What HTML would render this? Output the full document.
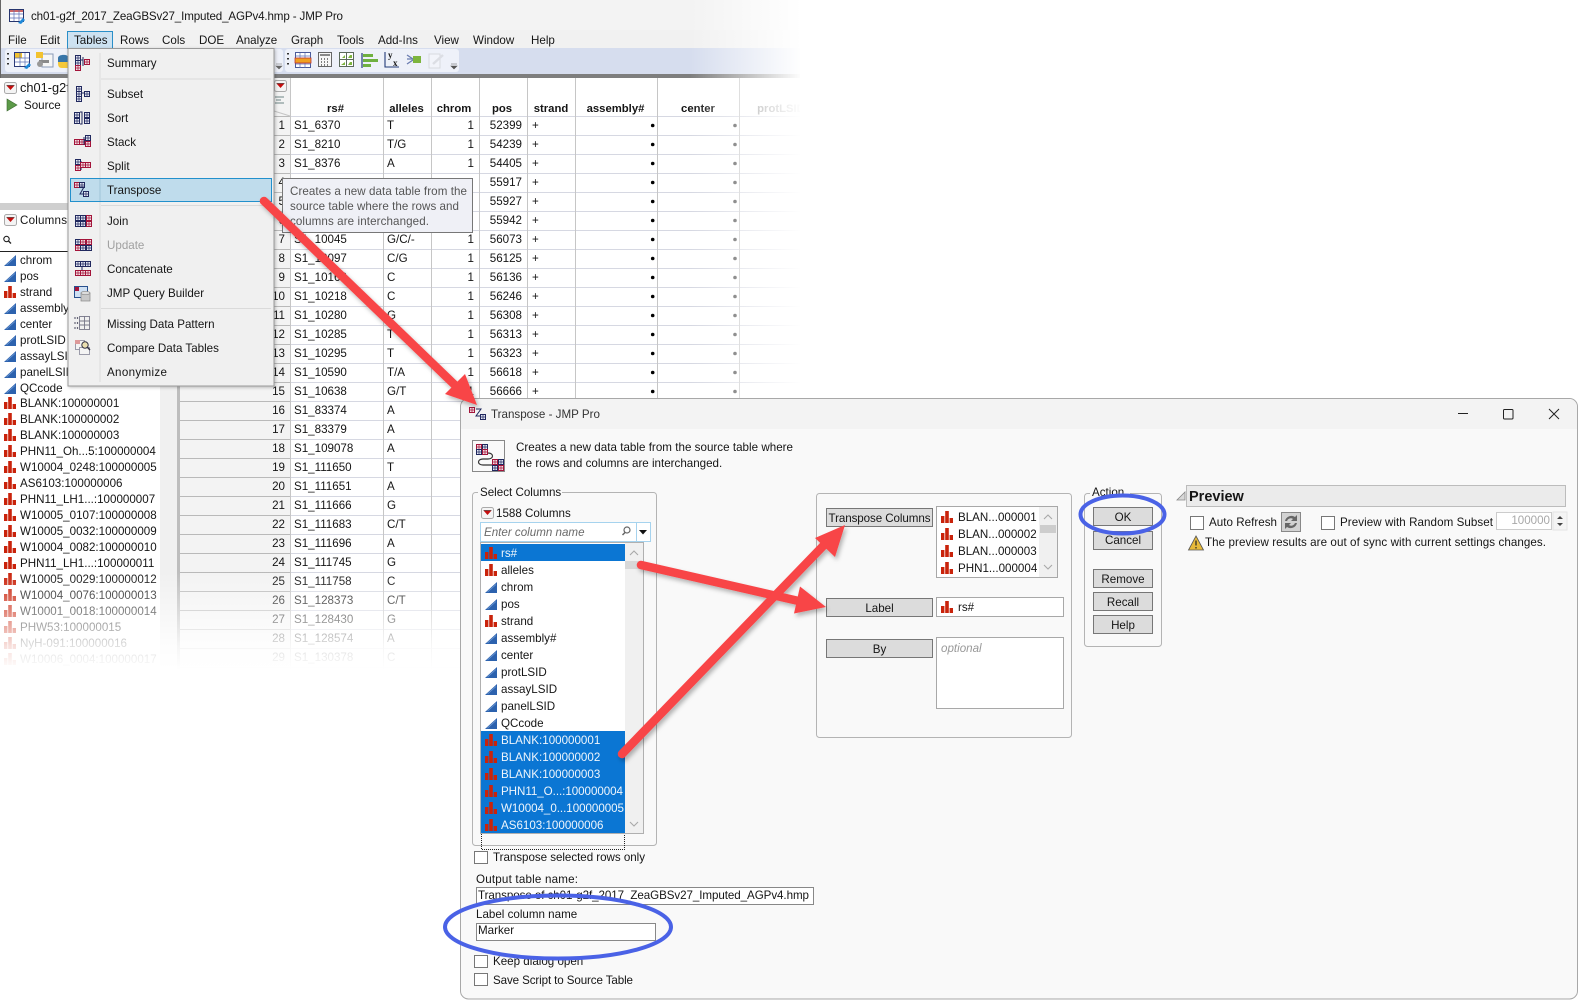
<!DOCTYPE html>
<html lang="en"><head><meta charset="utf-8"><title>JMP Transpose</title>
<style>
html,body{margin:0;padding:0;background:#fff;width:1578px;height:1000px;overflow:hidden}
svg{display:block}
text{font-family:"Liberation Sans",sans-serif;font-size:11.6px;fill:#151515}
.b{font-weight:bold;font-size:11.3px}
.c{text-anchor:middle}
.e{text-anchor:end}
.w text{fill:#eef5fc}
.i{font-style:italic}
</style></head><body>
<svg xmlns="http://www.w3.org/2000/svg" width="1578" height="1000" viewBox="0 0 1578 1000">
<defs>
<linearGradient id="fr" x1="0" x2="1" y1="0" y2="0"><stop offset="0" stop-color="#fff" stop-opacity="0"/><stop offset="1" stop-color="#fff"/></linearGradient>
<linearGradient id="fb" x1="0" x2="0" y1="0" y2="1"><stop offset="0" stop-color="#fff" stop-opacity="0"/><stop offset=".75" stop-color="#fff" stop-opacity=".85"/><stop offset="1" stop-color="#fff"/></linearGradient>
<filter id="sh" x="-20%" y="-20%" width="140%" height="140%"><feDropShadow dx="2" dy="3" stdDeviation="2.2" flood-color="#000" flood-opacity=".28"/></filter>
<filter id="ms" x="-5%" y="-5%" width="110%" height="110%"><feDropShadow dx="1" dy="1" stdDeviation="1.5" flood-color="#000" flood-opacity=".25"/></filter>
<symbol id="bar" viewBox="0 0 12 12" width="12" height="12"><path d="M0 5h3.400v7H0zM4.200 0h3.600v12H4.200zM8.600 7H12v5H8.600z" fill="#c9230b"/></symbol>
<symbol id="tri" viewBox="0 0 12 12" width="12" height="12"><path d="M0 12L12 1v11z" fill="#2c62ae"/><path d="M2.500 11L11 3.500" stroke="#6f9ad4" stroke-width=".8"/></symbol>
<g id="cn"><rect x=".5" y=".5" width="5" height="5" fill="#e6e9f6" stroke="#20285e"/><path d="M3 .5v5M.5 3h5" stroke="#20285e" stroke-width=".7"/></g>
<g id="cr"><rect x=".5" y=".5" width="5" height="5" fill="#f3dfe5" stroke="#a3143a"/><path d="M3 .5v5M.5 3h5" stroke="#a3143a" stroke-width=".7"/></g>
<symbol id="rb" viewBox="0 0 13 12" width="13" height="12"><rect x=".5" y=".5" width="12" height="11" rx="2" fill="#f4f4f4" stroke="#aaa"/><path d="M2.600 3.600h7.800L6.500 8z" fill="#c40d0d"/><path d="M2.600 3.600h7.800" stroke="#400" stroke-width=".7"/></symbol>
<symbol id="up" viewBox="0 0 10 6" width="10" height="6"><path d="M1 5l4-4 4 4" fill="none" stroke="#a8a8a8" stroke-width="1.100"/></symbol>
<symbol id="dn" viewBox="0 0 10 6" width="10" height="6"><path d="M1 1l4 4 4-4" fill="none" stroke="#a8a8a8" stroke-width="1.100"/></symbol>
</defs>

<!-- main JMP window -->
<rect width="1578" height="1000" fill="#fff"/>
<rect x="0" y="0" width="810" height="30" fill="#f3f3f3"/>
<rect x="0" y="30" width="810" height="18" fill="#f1f1f1"/>
<rect x="0" y="48" width="810" height="26" fill="#d6ddee"/>
<rect x="5" y="49" width="278" height="23" rx="3" fill="#eef1f9"/>
<rect x="285" y="49" width="174" height="23" rx="3" fill="#eef1f9"/>
<rect x="0" y="74" width="810" height="4" fill="#7e7e7e"/>
<rect x="0" y="0" width="1" height="640" fill="#666"/>
<!-- title -->
<g transform="translate(9,9)"><rect x=".5" y=".5" width="14" height="12" fill="#fff" stroke="#26356e"/><rect x="1" y="1" width="13" height="2" fill="#c66"/><path d="M1 5h13M1 9h13M5 1v11M10 1v11" stroke="#5b6fb5" stroke-width=".7"/><path d="M9 14l5-5 2 2-4 4z" fill="#1e88d8"/></g>
<text x="31" y="20" textLength="312">ch01-g2f_2017_ZeaGBSv27_Imputed_AGPv4.hmp - JMP Pro</text>
<!-- menubar -->
<text x="8" y="44">File</text><text x="40" y="44">Edit</text>
<rect x="67.500" y="31.500" width="45" height="17" fill="#cde2f1" stroke="#2a8fc8"/>
<text x="74" y="44">Tables</text><text x="120" y="44">Rows</text><text x="162" y="44">Cols</text><text x="199" y="44">DOE</text><text x="236" y="44">Analyze</text><text x="291" y="44">Graph</text><text x="337" y="44">Tools</text><text x="378" y="44">Add-Ins</text><text x="434" y="44">View</text><text x="473" y="44">Window</text><text x="531" y="44">Help</text>
<!-- toolbar icons -->
<path d="M8 53v1.500M8 58v1.500M8 63v1.500" stroke="#333" stroke-width="2"/>
<g transform="translate(14,52)"><rect x=".5" y=".5" width="15" height="14" fill="#fff" stroke="#2b3a7a"/><rect x="1" y="1" width="7" height="5" fill="#f2c230"/><path d="M1 6h14M1 10h14M6 1v13M11 1v13" stroke="#5b6fb5" stroke-width=".7"/><path d="M10 16l5-5 2 2-4 4z" fill="#1e88d8"/></g>
<g transform="translate(36,52)"><rect x="6" y="2" width="11" height="13" fill="#f6f6f6" stroke="#8a9ab8"/><rect x="0" y="0" width="7" height="6" fill="#f2c230"/><path d="M3 8h10v3H3z" fill="#8a8a8a"/><circle cx="4" cy="12" r="3" fill="#999"/></g>
<path d="M58 58c0-4 10-4 10-1v5H58z" fill="#3775a9"/><path d="M58 62h10v6h-6c-4 0-4-3-4-6z" fill="#f5c83a"/>
<path d="M276 64h6M276 66h6l-3 3z" fill="#666" stroke="#666" stroke-width=".6"/>
<path d="M288 53v1.500M288 58v1.500M288 63v1.500" stroke="#333" stroke-width="2"/>
<g transform="translate(295,52)"><rect x=".5" y=".5" width="15" height="15" fill="#fff" stroke="#4a5a9a"/><path d="M1 4h15M1 12h15M5 1v15M10 1v15" stroke="#5b6fb5" stroke-width=".7"/><rect x="0" y="6" width="16" height="5" fill="#f0a020" stroke="#b33" stroke-width=".8"/></g>
<g transform="translate(318,52)"><rect x=".5" y=".5" width="13" height="14" fill="#f6f6f6" stroke="#666"/><rect x="2" y="2" width="10" height="2" fill="#888"/><path d="M3 7h1M6 7h1M9 7h1M3 10h1M6 10h1M9 10h1M3 13h1M6 13h1M9 13h1" stroke="#555" stroke-width="1.600"/></g>
<g transform="translate(339,52)"><rect x=".5" y=".5" width="14" height="14" fill="#fff" stroke="#5c6a5c"/><path d="M7.500 1v13M1 7.500h13" stroke="#5c6a5c"/><path d="M3 6h3V3zM9 6h4V3H11zM2 13h4v-3zM9 13h4v-3H11z" fill="#7db53e"/></g>
<path d="M362 53v15" stroke="#223a78" stroke-width="1.200"/><path d="M363 54h10v3h-10zM363 59h15v3h-15zM363 64h8v3h-8z" fill="#6fb040"/>
<path d="M385 52v15h14" fill="none" stroke="#223a78" stroke-width="1.100"/><text x="388" y="58" class="b" style="font-family:'Liberation Serif',serif;font-size:9px">y</text><text x="393" y="66" class="b" style="font-family:'Liberation Serif',serif;font-size:9px">x</text>
<path d="M407 55l6 4M407 59h6M407 64l6-4" stroke="#6a7cb0" stroke-width="1.300"/><rect x="413" y="56" width="8" height="7" fill="#7db53e"/>
<g opacity=".25"><rect x="429" y="54" width="11" height="14" fill="#fff" stroke="#999"/><path d="M433 64l10-9" stroke="#aaa" stroke-width="2.500"/></g>
<path d="M451 64h6M451 66h6l-3 3z" fill="#555" stroke="#555" stroke-width=".6"/>

<!-- left panels -->
<rect x="0" y="78" width="68" height="125" fill="#fff"/>
<use href="#rb" x="4" y="82"/>
<text x="20" y="92" style="font-size:12.800px">ch01-g2f</text>
<path d="M7 99l10 6-10 6z" fill="#5c9a48" stroke="#3c6a30" stroke-width=".6"/>
<text x="24" y="109">Source</text>
<rect x="0" y="203" width="160" height="7" fill="#cfcfcf"/>
<rect x="0" y="210" width="160" height="450" fill="#fff"/>
<rect x="160" y="210" width="17" height="460" fill="#f0f0f0"/>
<rect x="160" y="78" width="17" height="132" fill="#f0f0f0"/>
<rect x="177" y="78" width="3" height="592" fill="#bdbdbd"/>
<use href="#rb" x="4" y="214"/>
<text x="20" y="224" textLength="47">Columns</text>
<circle cx="6.500" cy="239" r="2.700" fill="none" stroke="#222" stroke-width="1.100"/><path d="M8.500 241l2.500 2.500" stroke="#222" stroke-width="1.300"/>
<rect x="0" y="251" width="160" height="1" fill="#222"/>
<use href="#tri" x="4" y="254"/><text x="20" y="264">chrom</text>
<use href="#tri" x="4" y="270"/><text x="20" y="280">pos</text>
<use href="#bar" x="4" y="286"/><text x="20" y="296">strand</text>
<use href="#tri" x="4" y="302"/><text x="20" y="312">assembly#</text>
<use href="#tri" x="4" y="318"/><text x="20" y="328">center</text>
<use href="#tri" x="4" y="334"/><text x="20" y="344">protLSID</text>
<use href="#tri" x="4" y="350"/><text x="20" y="360">assayLSID</text>
<use href="#tri" x="4" y="366"/><text x="20" y="376">panelLSID</text>
<use href="#tri" x="4" y="382"/><text x="20" y="392">QCcode</text>
<use href="#bar" x="4" y="397"/><text x="20" y="407">BLANK:100000001</text>
<use href="#bar" x="4" y="413"/><text x="20" y="423">BLANK:100000002</text>
<use href="#bar" x="4" y="429"/><text x="20" y="439">BLANK:100000003</text>
<use href="#bar" x="4" y="445"/><text x="20" y="455">PHN11_Oh...5:100000004</text>
<use href="#bar" x="4" y="461"/><text x="20" y="471">W10004_0248:100000005</text>
<use href="#bar" x="4" y="477"/><text x="20" y="487">AS6103:100000006</text>
<use href="#bar" x="4" y="493"/><text x="20" y="503">PHN11_LH1...:100000007</text>
<use href="#bar" x="4" y="509"/><text x="20" y="519">W10005_0107:100000008</text>
<use href="#bar" x="4" y="525"/><text x="20" y="535">W10005_0032:100000009</text>
<use href="#bar" x="4" y="541"/><text x="20" y="551">W10004_0082:100000010</text>
<use href="#bar" x="4" y="557"/><text x="20" y="567">PHN11_LH1...:100000011</text>
<use href="#bar" x="4" y="573"/><text x="20" y="583">W10005_0029:100000012</text>
<use href="#bar" x="4" y="589"/><text x="20" y="599">W10004_0076:100000013</text>
<use href="#bar" x="4" y="605"/><text x="20" y="615">W10001_0018:100000014</text>
<use href="#bar" x="4" y="621"/><text x="20" y="631">PHW53:100000015</text>
<use href="#bar" x="4" y="637"/><text x="20" y="647">NyH-091:100000016</text>
<use href="#bar" x="4" y="653"/><text x="20" y="663">W10006_0004:100000017</text>

<!-- data table -->
<rect x="180" y="78" width="110" height="592" fill="#f3f3f3"/>
<rect x="290" y="78" width="520" height="592" fill="#fff"/>
<path d="M290 116.500h520M290 135.500h520M290 154.500h520M290 173.500h520M290 192.500h520M290 211.500h520M290 230.500h520M290 249.500h520M290 268.500h520M290 287.500h520M290 306.500h520M290 325.500h520M290 344.500h520M290 363.500h520M290 382.500h520M290 401.500h520M290 420.500h520M290 439.500h520M290 458.500h520M290 477.500h520M290 496.500h520M290 515.500h520M290 534.500h520M290 553.500h520M290 572.500h520M290 591.500h520M290 610.500h520M290 629.500h520M290 648.500h520M290 667.500h520" stroke="#d6d8e2" fill="none"/>
<path d="M180 116.500h110M180 135.500h110M180 154.500h110M180 173.500h110M180 192.500h110M180 211.500h110M180 230.500h110M180 249.500h110M180 268.500h110M180 287.500h110M180 306.500h110M180 325.500h110M180 344.500h110M180 363.500h110M180 382.500h110M180 401.500h110M180 420.500h110M180 439.500h110M180 458.500h110M180 477.500h110M180 496.500h110M180 515.500h110M180 534.500h110M180 553.500h110M180 572.500h110M180 591.500h110M180 610.500h110M180 629.500h110M180 648.500h110M180 667.500h110" stroke="#b9b9b9" fill="none"/>
<path d="M290.500 78v592M383.500 78v592M431.500 78v592M479.500 78v592M527.500 78v592M575.500 78v592M657.500 78v592M739.500 78v592" stroke="#c6c6c6" fill="none"/>
<use href="#rb" x="274" y="80"/>
<path d="M275 97h9M276 100h5M275 103h9" stroke="#9aa" stroke-width="1.400"/>
<path d="M274 111l16 5" stroke="#c4c4c4"/>
<text class="c b" x="335.500" y="112">rs#</text><text class="c b" x="406.500" y="112">alleles</text><text class="c b" x="454" y="112">chrom</text><text class="c b" x="502" y="112">pos</text><text class="c b" x="551" y="112">strand</text><text class="c b" x="615.500" y="112">assembly#</text><text class="c b" x="698" y="112">center</text><text class="c b" x="781" y="112" style="fill:#888">protLSID</text>
<!-- row numbers -->
<text class="e" x="285" y="129">1</text><text class="e" x="285" y="148">2</text><text class="e" x="285" y="167">3</text><text class="e" x="285" y="186">4</text><text class="e" x="285" y="205">5</text><text class="e" x="285" y="224">6</text><text class="e" x="285" y="243">7</text><text class="e" x="285" y="262">8</text><text class="e" x="285" y="281">9</text><text class="e" x="285" y="300">10</text><text class="e" x="285" y="319">11</text><text class="e" x="285" y="338">12</text><text class="e" x="285" y="357">13</text><text class="e" x="285" y="376">14</text><text class="e" x="285" y="395">15</text><text class="e" x="285" y="414">16</text><text class="e" x="285" y="433">17</text><text class="e" x="285" y="452">18</text><text class="e" x="285" y="471">19</text><text class="e" x="285" y="490">20</text><text class="e" x="285" y="509">21</text><text class="e" x="285" y="528">22</text><text class="e" x="285" y="547">23</text><text class="e" x="285" y="566">24</text><text class="e" x="285" y="585">25</text><text class="e" x="285" y="604">26</text><text class="e" x="285" y="623">27</text><text class="e" x="285" y="642">28</text><text class="e" x="285" y="661">29</text>
<!-- rs -->
<text x="294" y="129">S1_6370</text><text x="294" y="148">S1_8210</text><text x="294" y="167">S1_8376</text><text x="294" y="243">S1_10045</text><text x="294" y="262">S1_10097</text><text x="294" y="281">S1_10166</text><text x="294" y="300">S1_10218</text><text x="294" y="319">S1_10280</text><text x="294" y="338">S1_10285</text><text x="294" y="357">S1_10295</text><text x="294" y="376">S1_10590</text><text x="294" y="395">S1_10638</text><text x="294" y="414">S1_83374</text><text x="294" y="433">S1_83379</text><text x="294" y="452">S1_109078</text><text x="294" y="471">S1_111650</text><text x="294" y="490">S1_111651</text><text x="294" y="509">S1_111666</text><text x="294" y="528">S1_111683</text><text x="294" y="547">S1_111696</text><text x="294" y="566">S1_111745</text><text x="294" y="585">S1_111758</text><text x="294" y="604">S1_128373</text><text x="294" y="623">S1_128430</text><text x="294" y="642">S1_128574</text><text x="294" y="661">S1_130378</text>
<!-- alleles -->
<text x="387" y="129">T</text><text x="387" y="148">T/G</text><text x="387" y="167">A</text><text x="387" y="243">G/C/-</text><text x="387" y="262">C/G</text><text x="387" y="281">C</text><text x="387" y="300">C</text><text x="387" y="319">G</text><text x="387" y="338">T</text><text x="387" y="357">T</text><text x="387" y="376">T/A</text><text x="387" y="395">G/T</text><text x="387" y="414">A</text><text x="387" y="433">A</text><text x="387" y="452">A</text><text x="387" y="471">T</text><text x="387" y="490">A</text><text x="387" y="509">G</text><text x="387" y="528">C/T</text><text x="387" y="547">A</text><text x="387" y="566">G</text><text x="387" y="585">C</text><text x="387" y="604">C/T</text><text x="387" y="623">G</text><text x="387" y="642">A</text><text x="387" y="661">C</text>
<!-- chrom -->
<text class="e" x="474" y="129">1</text><text class="e" x="474" y="148">1</text><text class="e" x="474" y="167">1</text><text class="e" x="474" y="243">1</text><text class="e" x="474" y="262">1</text><text class="e" x="474" y="281">1</text><text class="e" x="474" y="300">1</text><text class="e" x="474" y="319">1</text><text class="e" x="474" y="338">1</text><text class="e" x="474" y="357">1</text><text class="e" x="474" y="376">1</text><text class="e" x="474" y="395">1</text>
<!-- pos -->
<text class="e" x="522" y="129">52399</text><text class="e" x="522" y="148">54239</text><text class="e" x="522" y="167">54405</text><text class="e" x="522" y="186">55917</text><text class="e" x="522" y="205">55927</text><text class="e" x="522" y="224">55942</text><text class="e" x="522" y="243">56073</text><text class="e" x="522" y="262">56125</text><text class="e" x="522" y="281">56136</text><text class="e" x="522" y="300">56246</text><text class="e" x="522" y="319">56308</text><text class="e" x="522" y="338">56313</text><text class="e" x="522" y="357">56323</text><text class="e" x="522" y="376">56618</text><text class="e" x="522" y="395">56666</text>
<!-- strand -->
<text x="532" y="129">+</text><text x="532" y="148">+</text><text x="532" y="167">+</text><text x="532" y="186">+</text><text x="532" y="205">+</text><text x="532" y="224">+</text><text x="532" y="243">+</text><text x="532" y="262">+</text><text x="532" y="281">+</text><text x="532" y="300">+</text><text x="532" y="319">+</text><text x="532" y="338">+</text><text x="532" y="357">+</text><text x="532" y="376">+</text><text x="532" y="395">+</text>
<!-- dots -->
<g fill="#000" transform="translate(-2.300,-.5)"><circle cx="655" cy="126" r="1.800"/><circle cx="655" cy="145" r="1.800"/><circle cx="655" cy="164" r="1.800"/><circle cx="655" cy="183" r="1.800"/><circle cx="655" cy="202" r="1.800"/><circle cx="655" cy="221" r="1.800"/><circle cx="655" cy="240" r="1.800"/><circle cx="655" cy="259" r="1.800"/><circle cx="655" cy="278" r="1.800"/><circle cx="655" cy="297" r="1.800"/><circle cx="655" cy="316" r="1.800"/><circle cx="655" cy="335" r="1.800"/><circle cx="655" cy="354" r="1.800"/><circle cx="655" cy="373" r="1.800"/><circle cx="655" cy="392" r="1.800"/></g>
<g fill="#444" transform="translate(-2,-.5)"><circle cx="737" cy="126" r="1.800"/><circle cx="737" cy="145" r="1.800"/><circle cx="737" cy="164" r="1.800"/><circle cx="737" cy="183" r="1.800"/><circle cx="737" cy="202" r="1.800"/><circle cx="737" cy="221" r="1.800"/><circle cx="737" cy="240" r="1.800"/><circle cx="737" cy="259" r="1.800"/><circle cx="737" cy="278" r="1.800"/><circle cx="737" cy="297" r="1.800"/><circle cx="737" cy="316" r="1.800"/><circle cx="737" cy="335" r="1.800"/><circle cx="737" cy="354" r="1.800"/><circle cx="737" cy="373" r="1.800"/><circle cx="737" cy="392" r="1.800"/></g>

<!-- fades -->
<rect x="690" y="0" width="112" height="398" fill="url(#fr)"/>
<rect x="800" y="0" width="778" height="398" fill="#fff"/>
<rect x="0" y="572" width="462" height="98" fill="url(#fb)"/>
<rect x="0" y="670" width="462" height="330" fill="#fff"/>

<!-- tooltip -->
<rect x="282.500" y="178.500" width="190" height="54" fill="#eff0f6" stroke="#777"/>
<text x="290" y="195" style="fill:#555" textLength="177">Creates a new data table from the</text>
<text x="290" y="210" style="fill:#555" textLength="169">source table where the rows and</text>
<text x="290" y="225" style="fill:#555" textLength="139">columns are interchanged.</text>

<!-- tables menu -->
<rect x="68" y="48.500" width="206" height="337.500" fill="#f0f0f0" stroke="#9a9a9a" filter="url(#ms)"/>
<path d="M100 53v329" stroke="#dcdcdc"/>
<path d="M101 79h170M101 205.500h170M101 308.500h170" stroke="#dadada"/>
<rect x="70.500" y="178.500" width="201" height="23" fill="#bfdcec" stroke="#2290cc"/>
<path d="M100 179v22" stroke="#9fc3d8"/>
<text x="107" y="67">Summary</text><text x="107" y="98">Subset</text><text x="107" y="122">Sort</text><text x="107" y="146">Stack</text><text x="107" y="170">Split</text><text x="107" y="194">Transpose</text><text x="107" y="225">Join</text><text x="107" y="249" style="fill:#a0a0a0">Update</text><text x="107" y="273">Concatenate</text><text x="107" y="297">JMP Query Builder</text><text x="107" y="328">Missing Data Pattern</text><text x="107" y="352">Compare Data Tables</text><text x="107" y="376" textLength="60">Anonymize</text>
<!-- menu icons -->
<use href="#cn" x="75" y="55"/><use href="#cn" x="75" y="60"/><use href="#cr" x="75" y="65"/><path d="M81 60h2M83 57v9" fill="none" stroke="#20285e"/><use href="#cr" x="84" y="59"/>
<use href="#cn" x="76" y="86"/><use href="#cn" x="76" y="91"/><use href="#cn" x="76" y="96"/><path d="M82 93h2" stroke="#20285e"/><use href="#cn" x="84" y="91"/>
<use href="#cn" x="74" y="112"/><use href="#cn" x="74" y="118"/><path d="M80 112h2v12h-2" fill="none" stroke="#20285e"/><use href="#cn" x="84" y="112"/><use href="#cn" x="84" y="118"/>
<use href="#cr" x="74" y="139"/><use href="#cr" x="79" y="139"/><path d="M85 141h-1M84 137v8" stroke="#20285e" fill="none"/><use href="#cn" x="85" y="135"/><use href="#cr" x="85" y="141"/>
<use href="#cn" x="75" y="159"/><use href="#cr" x="75" y="165"/><path d="M81 165h-0M81 161v9" stroke="#20285e" fill="none"/><use href="#cr" x="80" y="162"/><use href="#cr" x="85" y="162"/>
<use href="#cr" x="74" y="182"/><use href="#cn" x="79" y="182"/><path d="M80 187h4l-4 7h3" fill="none" stroke="#20285e"/><use href="#cn" x="83" y="191"/><use href="#cr" x="84" y="190" opacity="0"/>
<use href="#cn" x="75" y="215"/><use href="#cn" x="80" y="215"/><use href="#cn" x="75" y="221"/><use href="#cn" x="80" y="221"/><path d="M85 220h1" stroke="#20285e"/><use href="#cr" x="86" y="215"/><use href="#cr" x="86" y="221"/>
<use href="#cn" x="75" y="239"/><use href="#cr" x="80" y="239"/><use href="#cr" x="75" y="245"/><use href="#cn" x="80" y="245"/><path d="M85 244h1" stroke="#20285e"/><use href="#cr" x="86" y="239"/><use href="#cn" x="86" y="245"/>
<use href="#cn" x="75" y="261"/><use href="#cn" x="80" y="261"/><use href="#cn" x="85" y="261"/><path d="M82 267v3" stroke="#20285e"/><use href="#cr" x="75" y="270"/><use href="#cr" x="80" y="270"/><use href="#cr" x="85" y="270"/>
<rect x="74.500" y="286.500" width="13" height="11" fill="#cfe0f3" stroke="#28508e"/><rect x="75" y="287" width="4" height="4" fill="#a3143a"/><rect x="81" y="293" width="9" height="8" fill="#c8c8c8" stroke="#888" stroke-width=".7"/><ellipse cx="85.500" cy="293" rx="4.500" ry="1.700" fill="#ddd" stroke="#888" stroke-width=".7"/>
<g stroke="#778" fill="none" stroke-width=".9"><rect x="79.500" y="316.500" width="10" height="13"/><path d="M79 321h11M79 325h11M84.500 316v13"/></g><path d="M75 317v2M75 322v2M75 327v2M77.500 317v2M77.500 322v2M77.500 327v2" stroke="#667" stroke-width="1.200"/>
<g stroke="#889" fill="#f4f4f4" stroke-width=".8"><rect x="75.500" y="340.500" width="9" height="9"/><rect x="79.500" y="347.500" width="10" height="7"/></g><rect x="75" y="340" width="5" height="4" fill="#d99"/><circle cx="85" cy="345" r="3.200" fill="#eadfb0" stroke="#334"/><path d="M87.300 347.300l2.700 2.700" stroke="#334" stroke-width="1.400"/>

<!-- dialog -->
<rect x="460.500" y="398.500" width="1117" height="600.500" rx="8" fill="#f9f9f9" stroke="#a8a8a8"/>
<path d="M461 429V407a8 8 0 0 1 8-8H1569a8 8 0 0 1 8 8v22z" fill="#f3f3f3"/>
<use href="#cr" x="469" y="407"/>
<path d="M476 409h5l-5 7h4" fill="none" stroke="#20285e"/><use href="#cn" x="480" y="414"/>
<text x="491" y="418" style="fill:#333">Transpose - JMP Pro</text>
<path d="M1458 413.500h10" stroke="#222"/><rect x="1503.500" y="409.500" width="9.500" height="9.500" rx="1" fill="none" stroke="#222"/><path d="M1549 409l10 10M1559 409l-10 10" stroke="#222"/>
<!-- info -->
<rect x="472.500" y="440.500" width="32" height="31" fill="#f9f9f9" stroke="#888"/>
<use href="#cr" x="476" y="444"/><use href="#cn" x="482" y="444"/><use href="#cn" x="476" y="449"/><use href="#cr" x="482" y="449"/>
<path d="M488 453c6 0 6 6 0 6h-5c-6 0-6 6 0 6h9" fill="none" stroke="#333" stroke-width="1.200"/>
<use href="#cr" x="492" y="459"/><use href="#cn" x="498" y="459"/><use href="#cn" x="492" y="465"/><use href="#cr" x="498" y="465"/>
<text x="516" y="451" textLength="277">Creates a new data table from the source table where</text>
<text x="516" y="467">the rows and columns are interchanged.</text>

<!-- select columns group -->
<rect x="472.500" y="492.500" width="184" height="353" rx="3" fill="none" stroke="#b4b4b4"/>
<rect x="478" y="488" width="84" height="10" fill="#f9f9f9"/>
<text x="480" y="496">Select Columns</text>
<use href="#rb" x="481" y="507"/>
<text x="496" y="517">1588 Columns</text>
<rect x="480.500" y="522.500" width="170" height="19" fill="#fff" stroke="#a6d3ee"/>
<path d="M636.500 522v20" stroke="#a6d3ee"/>
<text x="484" y="536" class="i" style="fill:#6a6a6a">Enter column name</text>
<circle cx="627" cy="530" r="3" fill="none" stroke="#666" stroke-width="1.200"/><path d="M625 532.500l-2.500 2.500" stroke="#666" stroke-width="1.500"/>
<path d="M639 530h8l-4 4.500z" fill="#111"/>
<rect x="480.500" y="542.500" width="163" height="291" fill="#fff" stroke="#b0b0b0"/>
<rect x="625" y="543" width="18" height="290" fill="#f0f0f0"/>
<rect x="625" y="561" width="18" height="8" fill="#d8d8d8"/>
<use href="#up" x="629" y="550"/><use href="#dn" x="629" y="821"/>
<rect x="481" y="544" width="144" height="17" fill="#0b76d3"/>
<rect x="481" y="731" width="144" height="102" fill="#0b76d3"/>
<path d="M481.500 834v15.500h143V834" fill="none" stroke="#222" stroke-dasharray="1 1"/>
<use href="#bar" x="485" y="547"/><g class="w"><text x="501" y="557">rs#</text></g>
<use href="#bar" x="485" y="564"/><text x="501" y="574">alleles</text>
<use href="#tri" x="485" y="581"/><text x="501" y="591">chrom</text>
<use href="#tri" x="485" y="598"/><text x="501" y="608">pos</text>
<use href="#bar" x="485" y="615"/><text x="501" y="625">strand</text>
<use href="#tri" x="485" y="632"/><text x="501" y="642">assembly#</text>
<use href="#tri" x="485" y="649"/><text x="501" y="659">center</text>
<use href="#tri" x="485" y="666"/><text x="501" y="676">protLSID</text>
<use href="#tri" x="485" y="683"/><text x="501" y="693">assayLSID</text>
<use href="#tri" x="485" y="700"/><text x="501" y="710">panelLSID</text>
<use href="#tri" x="485" y="717"/><text x="501" y="727">QCcode</text>
<use href="#bar" x="485" y="734"/><use href="#bar" x="485" y="751"/><use href="#bar" x="485" y="768"/><use href="#bar" x="485" y="785"/><use href="#bar" x="485" y="802"/><use href="#bar" x="485" y="819"/>
<g class="w"><text x="501" y="744">BLANK:100000001</text><text x="501" y="761">BLANK:100000002</text><text x="501" y="778">BLANK:100000003</text><text x="501" y="795" textLength="122">PHN11_O...:100000004</text><text x="501" y="812" textLength="123">W10004_0...100000005</text><text x="501" y="829">AS6103:100000006</text></g>

<!-- lower left -->
<rect x="474.500" y="851.500" width="13" height="12" fill="#fff" stroke="#777"/>
<text x="493" y="861" textLength="152">Transpose selected rows only</text>
<text x="476" y="883" textLength="102">Output table name:</text>
<rect x="476.500" y="887.500" width="337" height="17" fill="#fff" stroke="#888"/>
<text x="478" y="899" textLength="331">Transpose of ch01-g2f_2017_ZeaGBSv27_Imputed_AGPv4.hmp</text>
<text x="476" y="918">Label column name</text>
<rect x="476.500" y="923.500" width="179" height="17" fill="#fff" stroke="#888"/>
<text x="478" y="934">Marker</text>
<rect x="474.500" y="955.500" width="13" height="12" fill="#fff" stroke="#777"/>
<text x="493" y="965">Keep dialog open</text>
<rect x="474.500" y="973.500" width="13" height="12" fill="#fff" stroke="#777"/>
<text x="493" y="984" textLength="140">Save Script to Source Table</text>

<!-- cast group -->
<rect x="816.500" y="493.500" width="255" height="244" rx="3" fill="none" stroke="#b4b4b4"/>
<rect x="826.500" y="508.500" width="106" height="18" fill="#dcdcdc" stroke="#777"/>
<text class="c" x="879.500" y="522" textLength="102">Transpose Columns</text>
<rect x="936.500" y="506.500" width="121" height="71" fill="#fff" stroke="#a8a8a8"/>
<rect x="1039" y="507" width="18" height="70" fill="#f0f0f0"/>
<rect x="1040" y="525" width="16" height="8" fill="#cdcdcd"/>
<use href="#up" x="1043" y="514"/><use href="#dn" x="1043" y="564"/>
<use href="#bar" x="941" y="511"/><text x="958" y="521">BLAN...000001</text>
<use href="#bar" x="941" y="528"/><text x="958" y="538">BLAN...000002</text>
<use href="#bar" x="941" y="545"/><text x="958" y="555">BLAN...000003</text>
<use href="#bar" x="941" y="562"/><text x="958" y="572">PHN1...000004</text>
<rect x="826.500" y="598.500" width="106" height="18" fill="#dcdcdc" stroke="#777"/>
<text class="c" x="879.500" y="612">Label</text>
<rect x="936.500" y="597.500" width="127" height="19" fill="#fff" stroke="#a8a8a8"/>
<use href="#bar" x="941" y="601"/><text x="958" y="611">rs#</text>
<rect x="826.500" y="639.500" width="106" height="18" fill="#dcdcdc" stroke="#777"/>
<text class="c" x="879.500" y="653">By</text>
<rect x="936.500" y="637.500" width="127" height="71" fill="#fff" stroke="#a8a8a8"/>
<text x="941" y="652" class="i" style="fill:#999">optional</text>

<!-- action -->
<rect x="1084.500" y="493.500" width="77" height="153" rx="3" fill="none" stroke="#b4b4b4"/>
<rect x="1090" y="488" width="40" height="10" fill="#f9f9f9"/>
<text x="1092" y="496">Action</text>
<rect x="1093.500" y="507.500" width="59" height="18" fill="#dcdcdc" stroke="#777"/><text class="c" x="1123" y="521">OK</text>
<rect x="1093.500" y="531.500" width="59" height="18" fill="#dcdcdc" stroke="#777"/><text class="c" x="1123" y="544">Cancel</text>
<rect x="1093.500" y="569.500" width="59" height="18" fill="#dcdcdc" stroke="#777"/><text class="c" x="1123" y="583">Remove</text>
<rect x="1093.500" y="592.500" width="59" height="18" fill="#dcdcdc" stroke="#777"/><text class="c" x="1123" y="606">Recall</text>
<rect x="1093.500" y="615.500" width="59" height="18" fill="#dcdcdc" stroke="#777"/><text class="c" x="1123" y="629">Help</text>

<!-- preview -->
<path d="M1177 500h8v-8z" fill="#d8d8d8" stroke="#888" stroke-width=".8"/>
<rect x="1186.500" y="485.500" width="379" height="21" fill="#ebebeb" stroke="#bcbcbc"/>
<text x="1189" y="501" class="b" style="font-size:14.500px">Preview</text>
<rect x="1190.500" y="516.500" width="13" height="13" fill="#fff" stroke="#777"/>
<text x="1209" y="526" textLength="68">Auto Refresh</text>
<rect x="1281.500" y="512.500" width="19" height="19" fill="#d2d2d2" stroke="#888"/>
<path d="M1285 521a6.500 6.500 0 0 1 10-4l2-2v6h-6l2-2a4 4 0 0 0-6 2zM1297 523a6.500 6.500 0 0 1-10 4l-2 2v-6h6l-2 2a4 4 0 0 0 6-2z" fill="#666"/>
<rect x="1321.500" y="516.500" width="13" height="13" fill="#fff" stroke="#777"/>
<text x="1340" y="526" textLength="153">Preview with Random Subset</text>
<rect x="1496.500" y="512.500" width="55" height="17" fill="#fff" stroke="#ccc"/>
<text class="e" x="1550" y="524" style="fill:#a8a8a8">100000</text>
<rect x="1553" y="512" width="14" height="18" fill="#f4f4f4" stroke="#e4e4e4"/>
<path d="M1557 519h6l-3-3zM1557 523h6l-3 3z" fill="#444"/>
<path d="M1196 536l7.500 14h-15z" fill="#e6b93a" stroke="#555" stroke-width=".8"/><path d="M1196 540.500v5M1196 547v1.500" stroke="#222" stroke-width="1.200"/>
<text x="1205" y="546" textLength="341">The preview results are out of sync with current settings changes.</text>

<!-- annotations -->
<g filter="url(#sh)">
<path d="M264 201L460 390" stroke="#f84447" stroke-width="8.500" stroke-linecap="round" fill="none"/>
<path d="M477 405L465 374L445 394z" fill="#f84447"/>
<path d="M641 565L803 602" stroke="#f84447" stroke-width="8.500" stroke-linecap="round" fill="none"/>
<path d="M826 607L800 586.500L794 613.500z" fill="#f84447"/>
<path d="M622 754L826 543" stroke="#f84447" stroke-width="8.500" stroke-linecap="round" fill="none"/>
<path d="M845 525L815 538L835 557z" fill="#f84447"/>
</g>
<g fill="none" stroke="#4a62e6" stroke-width="4">
<ellipse cx="558" cy="927" rx="113" ry="31.500"/>
<ellipse cx="1122.500" cy="514.500" rx="42" ry="19"/>
</g>
</svg>
</body></html>
